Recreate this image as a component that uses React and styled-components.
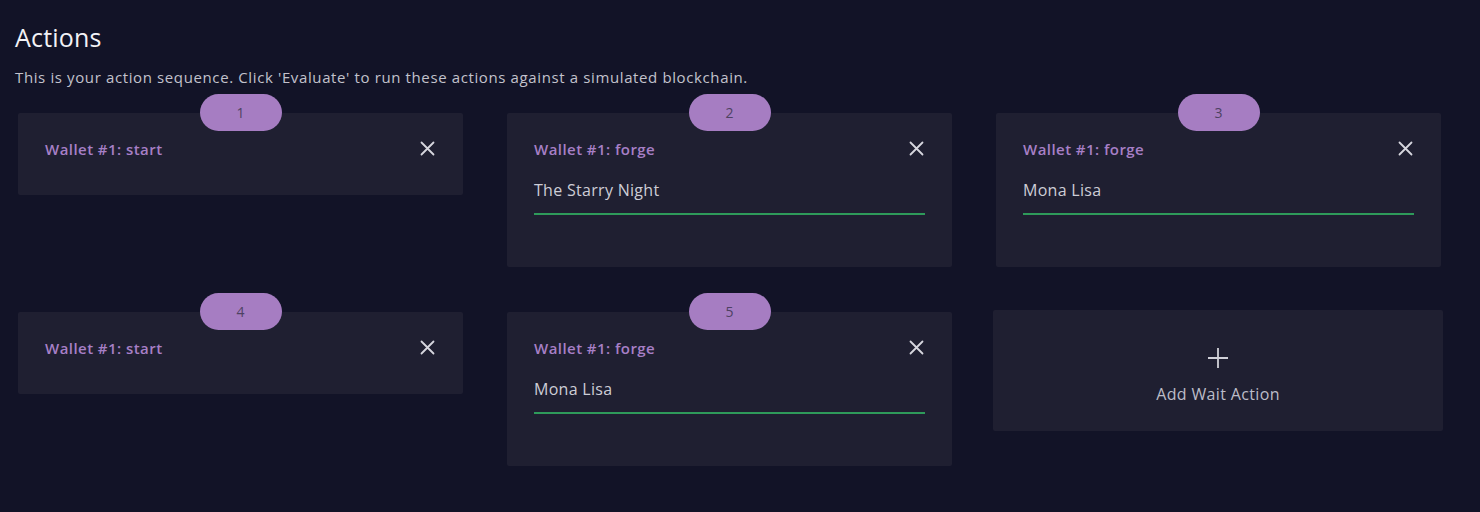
import React from "react";
import styled, { createGlobalStyle } from "styled-components";

const Global = createGlobalStyle`
  html, body { margin: 0; padding: 0; background: #121327; }
  body { font-family: "Open Sans", "Noto Sans", sans-serif; }
`;

const Page = styled.div`
  min-height: 512px;
  box-sizing: border-box;
  padding: 21px 39px 0 15px;
  background: #121327;
  color: #e6e6ec;
`;

const Heading = styled.h2`
  margin: 0;
  font-size: 25px;
  font-weight: 500;
  line-height: 32px;
  color: #f2f2f6;
  letter-spacing: 0.2px;
`;

const Description = styled.p`
  margin: 14px 0 0;
  font-size: 15px;
  line-height: 20px;
  color: #c2c2cc;
  letter-spacing: 0.62px;
`;

const Grid = styled.div`
  display: grid;
  grid-template-columns: repeat(3, 445px);
  column-gap: 44px;
  row-gap: 26px;
  align-items: start;
  margin: 7px 0 0 3px;
`;

const Cell = styled.div`
  position: relative;
  padding-top: 19px;
`;

const Badge = styled.div`
  position: absolute;
  top: 0;
  left: 50%;
  transform: translateX(-50%);
  width: 82px;
  height: 37px;
  border-radius: 19px;
  background: #a67dc2;
  color: #4e4262;
  font-size: 14px;
  display: flex;
  align-items: center;
  justify-content: center;
  z-index: 1;
`;

const Card = styled.div`
  background: #1f1f31;
  border-radius: 2px;
  padding: 26px 27px 36px;
`;

const CardHeader = styled.div`
  display: flex;
  align-items: center;
  justify-content: space-between;
  height: 20px;
`;

const Title = styled.span`
  font-size: 15px;
  font-weight: 600;
  color: #a77fc6;
  letter-spacing: 0.45px;
`;

const CloseButton = styled.button`
  width: 18px;
  height: 18px;
  padding: 0;
  margin-top: -2px;
  border: none;
  background: none;
  color: #d6d6de;
  display: flex;
  align-items: center;
  justify-content: center;
  cursor: pointer;
`;

const Field = styled.div`
  margin-top: 11px;
  height: 45px;
  padding-bottom: 4px;
  box-sizing: border-box;
  border-bottom: 2px solid #2e9a5a;
  display: flex;
  align-items: center;
  font-size: 16px;
  letter-spacing: 0.3px;
  color: #cdcdd6;
`;

const Helper = styled.div`
  height: 16px;
`;

const AddCard = styled.button`
  margin: -2px -2px 0 -3px;
  height: 121px;
  width: calc(100% + 5px);
  border: none;
  border-radius: 2px;
  background: #1f1f31;
  display: flex;
  flex-direction: column;
  align-items: center;
  justify-content: center;
  gap: 14px;
  color: #bcbcc8;
  font-family: inherit;
  font-size: 16px;
  letter-spacing: 0.35px;
  cursor: pointer;
  padding: 10px 0 0;
`;

const CloseIcon = () => (
  <svg width="15" height="15" viewBox="0 0 15 15" fill="none">
    <path d="M1.5 1.5 L13.5 13.5 M13.5 1.5 L1.5 13.5" stroke="currentColor" strokeWidth="1.8" strokeLinecap="round" />
  </svg>
);

const PlusIcon = () => (
  <svg width="22" height="22" viewBox="0 0 22 22" fill="none">
    <path d="M11 1 V21 M1 11 H21" stroke="#d0d0d8" strokeWidth="1.8" />
  </svg>
);

const actions = [
  { n: 1, title: "Wallet #1: start" },
  { n: 2, title: "Wallet #1: forge", value: "The Starry Night" },
  { n: 3, title: "Wallet #1: forge", value: "Mona Lisa" },
  { n: 4, title: "Wallet #1: start" },
  { n: 5, title: "Wallet #1: forge", value: "Mona Lisa" },
];

export default function App() {
  return (
    <>
      <Global />
      <Page>
        <Heading>Actions</Heading>
        <Description>
          This is your action sequence. Click 'Evaluate' to run these actions against a simulated blockchain.
        </Description>
        <Grid>
          {actions.map((a) => (
            <Cell key={a.n}>
              <Badge>{a.n}</Badge>
              <Card>
                <CardHeader>
                  <Title>{a.title}</Title>
                  <CloseButton aria-label="Remove">
                    <CloseIcon />
                  </CloseButton>
                </CardHeader>
                {a.value && (
                  <>
                    <Field>{a.value}</Field>
                    <Helper />
                  </>
                )}
              </Card>
            </Cell>
          ))}
          <Cell>
            <AddCard>
              <PlusIcon />
              Add Wait Action
            </AddCard>
          </Cell>
        </Grid>
      </Page>
    </>
  );
}
